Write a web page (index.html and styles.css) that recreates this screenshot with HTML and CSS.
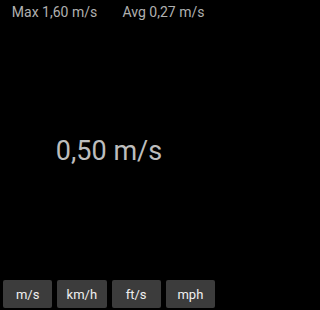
FILE: index.html
```html
<!DOCTYPE html>
<html>
<head>
<meta charset="utf-8">
<link rel="stylesheet" href="styles.css">
</head>
<body>
<div class="app">
  <div class="stats">
    <div class="stat">Max 1,60 m/s</div>
    <div class="stat">Avg 0,27 m/s</div>
  </div>
  <div class="speed">0,50 m/s</div>
  <div class="units">
    <button class="unit">m/s</button>
    <button class="unit">km/h</button>
    <button class="unit">ft/s</button>
    <button class="unit">mph</button>
  </div>
</div>
</body>
</html>
```
FILE: styles.css
```css
html, body {
  margin: 0;
  padding: 0;
  background: #000;
}
.app {
  width: 218px;
  height: 310px;
  display: flex;
  flex-direction: column;
  font-family: Roboto, "Liberation Sans", sans-serif;
}
.stats {
  display: flex;
  padding-top: 2px;
}
.stat {
  flex: 1;
  text-align: center;
  font-size: 14px;
  line-height: 20px;
  color: #b0b0b0;
}
.speed {
  flex: 1;
  display: flex;
  align-items: center;
  justify-content: center;
  font-size: 27px;
  color: #bdbdbd;
  padding-top: 0;
}
.units {
  display: flex;
  gap: 5px;
  padding: 0 3px 2px 3px;
}
.unit {
  flex: 1;
  height: 28px;
  margin: 0;
  padding: 0;
  border: none;
  border-radius: 2px;
  background: #3c3c3c;
  color: #f0f0f0;
  font-family: Roboto, "Liberation Sans", sans-serif;
  font-size: 13px;
}
```
